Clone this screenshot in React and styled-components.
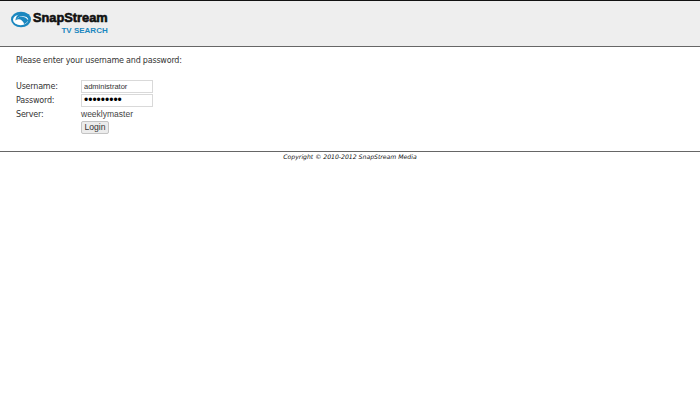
import React from 'react';
import styled, { createGlobalStyle } from 'styled-components';

const GlobalStyle = createGlobalStyle`
  html, body {
    margin: 0;
    padding: 0;
    background: #fff;
    font-family: "DejaVu Sans", Verdana, sans-serif;
  }
`;

const App = () => {
  return (
    <Page>
      <GlobalStyle />
      <Header>
        <Logo>
          <LogoIcon viewBox="0 0 24 20">
            <ellipse cx="11" cy="8.5" rx="10" ry="7.8" fill="#1b87bf" />
            <ellipse cx="10.6" cy="8.8" rx="7.6" ry="5.4" fill="#fff" />
            <path d="M5.5 9.5 C7 6.5 10 5 13 5.2 C15.5 5.4 17.5 6.4 19 8 L19.5 3.5 L12 1.5 C8 3 5.5 6 5.5 9.5 Z" fill="#1b87bf" />
            <path d="M5.5 9.5 C7.5 8 10 8 11.5 9.2 C13 10.4 13.8 11.6 14 13 C16 12.4 17.5 11 18.2 9.2 C16.5 6.6 13.5 5.6 11 5.8 C8.5 6 6.5 7.4 5.5 9.5 Z" fill="#1b87bf" />
          </LogoIcon>
          <LogoText>
            <LogoName>SnapStream</LogoName>
            <LogoProduct>TV SEARCH</LogoProduct>
          </LogoText>
        </Logo>
      </Header>
      <Main>
        <Intro>Please enter your username and password:</Intro>
        <Form>
          <FieldLabel>Username:</FieldLabel>
          <TextInput type="text" defaultValue="administrator" />
          <FieldLabel>Password:</FieldLabel>
          <TextInput type="password" defaultValue="123456789" $dots />
          <FieldLabel>Server:</FieldLabel>
          <ServerName>weeklymaster</ServerName>
          <span />
          <LoginButton type="button">Login</LoginButton>
        </Form>
      </Main>
      <Footer>Copyright © 2010-2012 SnapStream Media</Footer>
    </Page>
  );
};

export default App;

const Page = styled.div`
  width: 700px;
  height: 420px;
  overflow: hidden;
  background: #fff;
  color: #333;
`;

const Header = styled.header`
  height: 45px;
  background: #eeeeee;
  border-top: 1px solid #111;
  border-bottom: 1px solid #666;
  display: flex;
  align-items: flex-start;
  padding-left: 10px;
`;

const Logo = styled.div`
  display: flex;
  align-items: flex-start;
  padding-top: 10px;
`;

const LogoIcon = styled.svg`
  width: 24px;
  height: 20px;
`;

const LogoText = styled.div`
  display: flex;
  flex-direction: column;
  align-items: flex-end;
  margin-left: -1px;
`;

const LogoName = styled.div`
  font-family: "Liberation Sans", Arial, sans-serif;
  font-size: 12.8px;
  font-weight: 700;
  line-height: 14px;
  color: #111;
  -webkit-text-stroke: 0.6px #111;
`;

const LogoProduct = styled.div`
  font-family: "Liberation Sans", Arial, sans-serif;
  font-size: 8px;
  font-weight: 700;
  line-height: 11px;
  color: #1b87bf;
`;

const Main = styled.main`
  height: 96px;
  padding: 8px 16px 0;
`;

const Intro = styled.p`
  margin: 0;
  font-size: 8px;
  line-height: 12px;
  letter-spacing: -0.2px;
`;

const Form = styled.form`
  display: grid;
  grid-template-columns: 65px 72px;
  grid-auto-rows: 14px;
  align-items: center;
  margin-top: 12px;
`;

const FieldLabel = styled.label`
  padding-top: 1px;
  font-size: 8px;
  line-height: 12px;
  letter-spacing: -0.2px;
`;

const TextInput = styled.input`
  box-sizing: border-box;
  width: 72px;
  height: 13px;
  margin: 0;
  padding: 0 2px;
  border: 1px solid #d9d9d9;
  background: #fff;
  font-family: "Liberation Sans", Arial, sans-serif;
  font-size: ${(props) => (props.$dots ? '12px' : '7.5px')};
  color: ${(props) => (props.$dots ? '#000' : '#333')};
  outline: none;
`;

const ServerName = styled.span`
  font-family: "Liberation Sans", Arial, sans-serif;
  font-size: 8.5px;
  line-height: 12px;
  color: #444;
`;

const LoginButton = styled.button`
  box-sizing: border-box;
  align-self: start;
  width: 28px;
  height: 13px;
  margin: 0;
  padding: 0;
  border: 1px solid #c4c4c4;
  border-radius: 2px;
  background: #ececec;
  font-family: "Liberation Sans", Arial, sans-serif;
  font-size: 8.6px;
  line-height: 11px;
  color: #333;
`;

const Footer = styled.footer`
  border-top: 1px solid #666;
  text-align: center;
  font-size: 6.13px;
  font-style: italic;
  line-height: 9px;
  color: #111;
`;
